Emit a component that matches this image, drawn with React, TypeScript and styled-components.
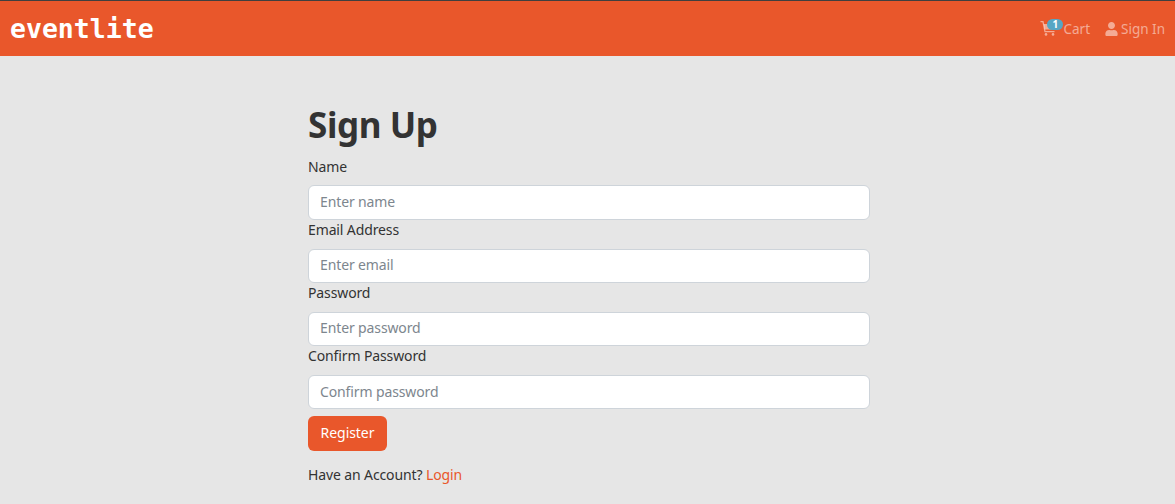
import React from "react";
import styled, { createGlobalStyle } from "styled-components";

const Global = createGlobalStyle`
  html, body { margin: 0; padding: 0; background: #e6e6e6; }
  body { font-family: "Noto Sans", "Open Sans", sans-serif; font-size: 14px; color: #333; }
  * { box-sizing: border-box; }
`;

const Page = styled.div`
  height: 504px;
  overflow: hidden;
  background: #e6e6e6;
`;

const Navbar = styled.header`
  height: 56px;
  background: #e9572b;
  border-top: 1px solid #3f3f3f;
  display: flex;
  align-items: center;
  justify-content: space-between;
  padding: 0 10px;
`;

const Brand = styled.a`
  font-family: "DejaVu Sans Mono", monospace;
  font-weight: 700;
  font-size: 26.5px;
  line-height: 30px;
  color: #fff;
`;

const NavLinks = styled.nav`
  display: flex;
  align-items: center;
  gap: 15px;
`;

const NavLink = styled.a<{ $gap: number }>`
  position: relative;
  display: flex;
  align-items: center;
  gap: ${(p) => p.$gap}px;
  color: rgba(255, 255, 255, 0.5);
  font-size: 13.5px;
  line-height: 20px;
`;

const Badge = styled.span`
  position: absolute;
  left: 7px;
  top: 0;
  width: 16px;
  height: 11px;
  border-radius: 6px;
  background: #56a6c4;
  color: #fff;
  font-size: 10px;
  font-weight: 700;
  line-height: 11px;
  text-align: center;
`;

const Main = styled.main`
  width: 562px;
  margin-left: 308px;
  padding-top: 45px;
`;

const Title = styled.h1`
  margin: 0 0 7.55px;
  font-size: 35px;
  line-height: 47px;
  font-weight: 700;
  letter-spacing: -0.4px;
  color: #333;
`;

const Field = styled.div`
  display: flex;
  flex-direction: column;
  margin-bottom: -0.85px;
`;

const Label = styled.label`
  font-size: 14px;
  line-height: 21px;
  letter-spacing: -0.12px;
  margin-bottom: 8.9px;
  color: #333;
`;

const Input = styled.input`
  display: block;
  width: 100%;
  height: 34.15px;
  padding: 0 11px 2px;
  border: 1px solid #ced4da;
  border-radius: 6px;
  background: #fff;
  font-family: inherit;
  font-size: 14px;
  letter-spacing: -0.12px;
  &::placeholder { color: #7d868e; opacity: 1; }
`;

const Button = styled.button`
  display: block;
  width: 79px;
  height: 35px;
  margin-top: 7.65px;
  padding: 0 0 2px;
  border: none;
  border-radius: 6px;
  background: #e9572b;
  color: #fff;
  font-family: inherit;
  font-size: 14px;
  letter-spacing: -0.05px;
`;

const Footer = styled.p`
  margin: 13px 0 0;
  font-size: 14px;
  line-height: 21px;
  letter-spacing: -0.12px;
  color: #333;
`;

const FooterLink = styled.a`
  color: #e9572b;
`;

const CartIcon = () => (
  <svg width="16" height="16" viewBox="0 0 16 16" fill="none" stroke="rgba(255,255,255,0.5)">
    <path d="M0.5 0.7H3L5 10.6H14.5" strokeWidth="1.3" />
    <path d="M3.6 3H15L13.8 8.6H4.7Z" fill="rgba(255,255,255,0.5)" stroke="none" />
    <circle cx="6" cy="13.4" r="1.3" fill="rgba(255,255,255,0.5)" stroke="none" />
    <circle cx="13" cy="13.4" r="1.3" fill="rgba(255,255,255,0.5)" stroke="none" />
  </svg>
);

const UserIcon = () => (
  <svg width="13" height="14" viewBox="0 0 448 512" fill="rgba(255,255,255,0.5)">
    <path d="M224 256c70.7 0 128-57.3 128-128S294.7 0 224 0 96 57.3 96 128s57.3 128 128 128zm89.6 32h-16.7c-22.2 10.2-46.9 16-72.9 16s-50.6-5.8-72.9-16h-16.7C60.2 288 0 348.2 0 422.4V464c0 26.5 21.5 48 48 48h352c26.5 0 48-21.5 48-48v-41.6c0-74.2-60.2-134.4-134.4-134.4z" />
  </svg>
);

const fields = [
  ["Name", "Enter name", "text"],
  ["Email Address", "Enter email", "email"],
  ["Password", "Enter password", "password"],
  ["Confirm Password", "Confirm password", "password"],
];

export default function App() {
  return (
    <Page>
      <Global />
      <Navbar>
        <Brand>eventlite</Brand>
        <NavLinks>
          <NavLink $gap={7}>
            <CartIcon />
            <Badge>1</Badge>
            Cart
          </NavLink>
          <NavLink $gap={3}>
            <UserIcon />
            Sign In
          </NavLink>
        </NavLinks>
      </Navbar>
      <Main>
        <Title>Sign Up</Title>
        {fields.map(([label, placeholder, type]) => (
          <Field key={label}>
            <Label>{label}</Label>
            <Input type={type} placeholder={placeholder} />
          </Field>
        ))}
        <Button>Register</Button>
        <Footer>
          Have an Account? <FooterLink>Login</FooterLink>
        </Footer>
      </Main>
    </Page>
  );
}
